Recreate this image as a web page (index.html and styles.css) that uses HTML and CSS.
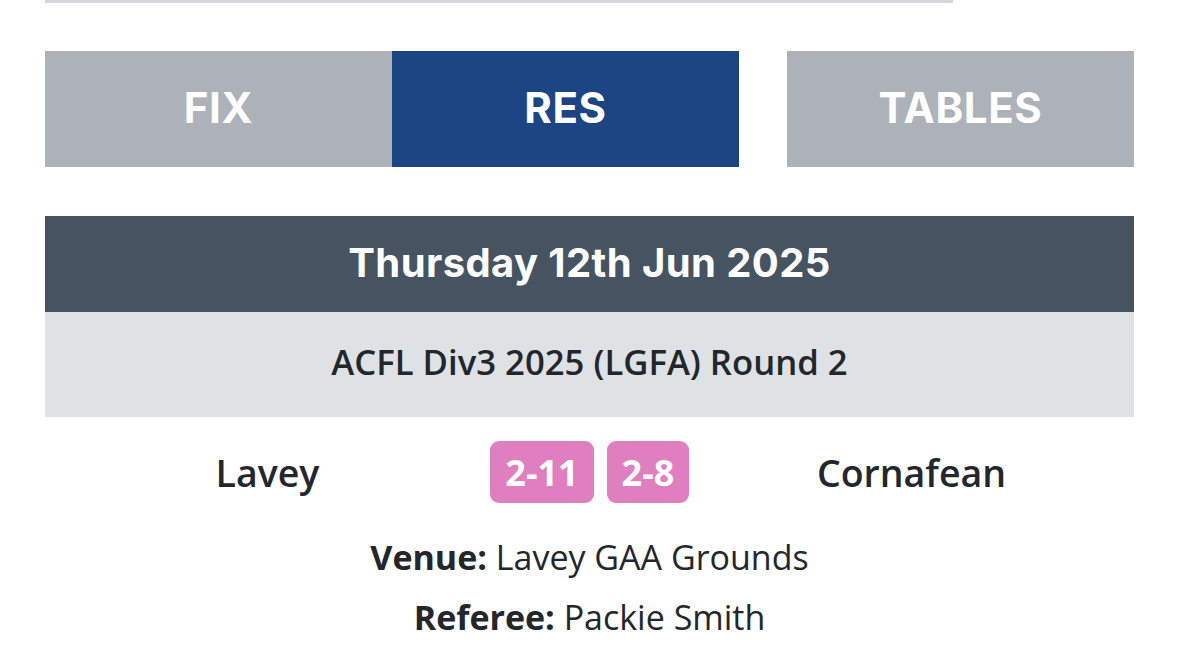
FILE: index.html
```html
<!DOCTYPE html>
<html lang="en">
<head>
<meta charset="utf-8">
<title>Results</title>
<link rel="stylesheet" href="styles.css">
</head>
<body>
<div class="page">
  <div class="topline"></div>
  <nav class="tabs">
    <a class="tab">FIX</a>
    <a class="tab active">RES</a>
    <span class="tab-gap"></span>
    <a class="tab">TABLES</a>
  </nav>
  <div class="date-bar">Thursday 12th Jun 2025</div>
  <div class="comp-bar">ACFL Div3 2025 (LGFA) Round 2</div>
  <div class="match">
    <div class="team">Lavey</div>
    <div class="scores">
      <span class="score wide">2-11</span>
      <span class="score">2-8</span>
    </div>
    <div class="team">Cornafean</div>
  </div>
  <div class="details">
    <p class="line"><b>Venue:</b> Lavey GAA Grounds</p>
    <p class="line"><b>Referee:</b> Packie Smith</p>
  </div>
</div>
</body>
</html>
```

FILE: styles.css
```css
html, body {
  margin: 0;
  padding: 0;
  background: #ffffff;
}

.page {
  width: 1089px;
  margin-left: 45px;
  font-family: "Open Sans", "Liberation Sans", sans-serif;
  color: #23262b;
}

.topline {
  width: 908px;
  height: 3px;
  background: #d4d6dc;
}

.tabs {
  display: grid;
  grid-template-columns: 347px 347px 48px 347px;
  margin-top: 48px;
  height: 116px;
}

.tab {
  display: flex;
  align-items: center;
  justify-content: center;
  padding-bottom: 3px;
  background: #adb2b9;
  color: #ffffff;
  font-family: Inter, "Open Sans", sans-serif;
  font-weight: 700;
  font-size: 42px;
  letter-spacing: 0.6px;
}

.tab.active {
  background: #1b4583;
}

.tab-gap {
  background: transparent;
}

.date-bar {
  margin-top: 49px;
  height: 96px;
  display: flex;
  align-items: center;
  justify-content: center;
  padding-bottom: 3px;
  box-sizing: border-box;
  background: #465462;
  color: #ffffff;
  font-family: Inter, "Open Sans", sans-serif;
  font-weight: 700;
  font-size: 40px;
  letter-spacing: 0.4px;
}

.comp-bar {
  height: 105px;
  display: flex;
  align-items: center;
  justify-content: center;
  padding-bottom: 7px;
  box-sizing: border-box;
  background: #dfe2e5;
  font-weight: 600;
  font-size: 34.7px;
}

.match {
  display: grid;
  grid-template-columns: 5fr 2fr 5fr;
  align-items: center;
  margin-top: 24px;
}

.team {
  text-align: center;
  font-weight: 600;
  font-size: 37.5px;
}

.scores {
  display: flex;
  justify-content: center;
  gap: 13px;
}

.score {
  display: flex;
  align-items: center;
  justify-content: center;
  width: 82px;
  height: 62px;
  border-radius: 9px;
  background: #e07fc0;
  color: #ffffff;
  font-weight: 700;
  font-size: 36px;
}

.score.wide {
  width: 104px;
}

.details {
  margin-top: 24px;
  text-align: center;
}

.line {
  margin: 0;
  font-size: 34px;
  line-height: 60px;
}

.line b {
  font-weight: 700;
}
```
